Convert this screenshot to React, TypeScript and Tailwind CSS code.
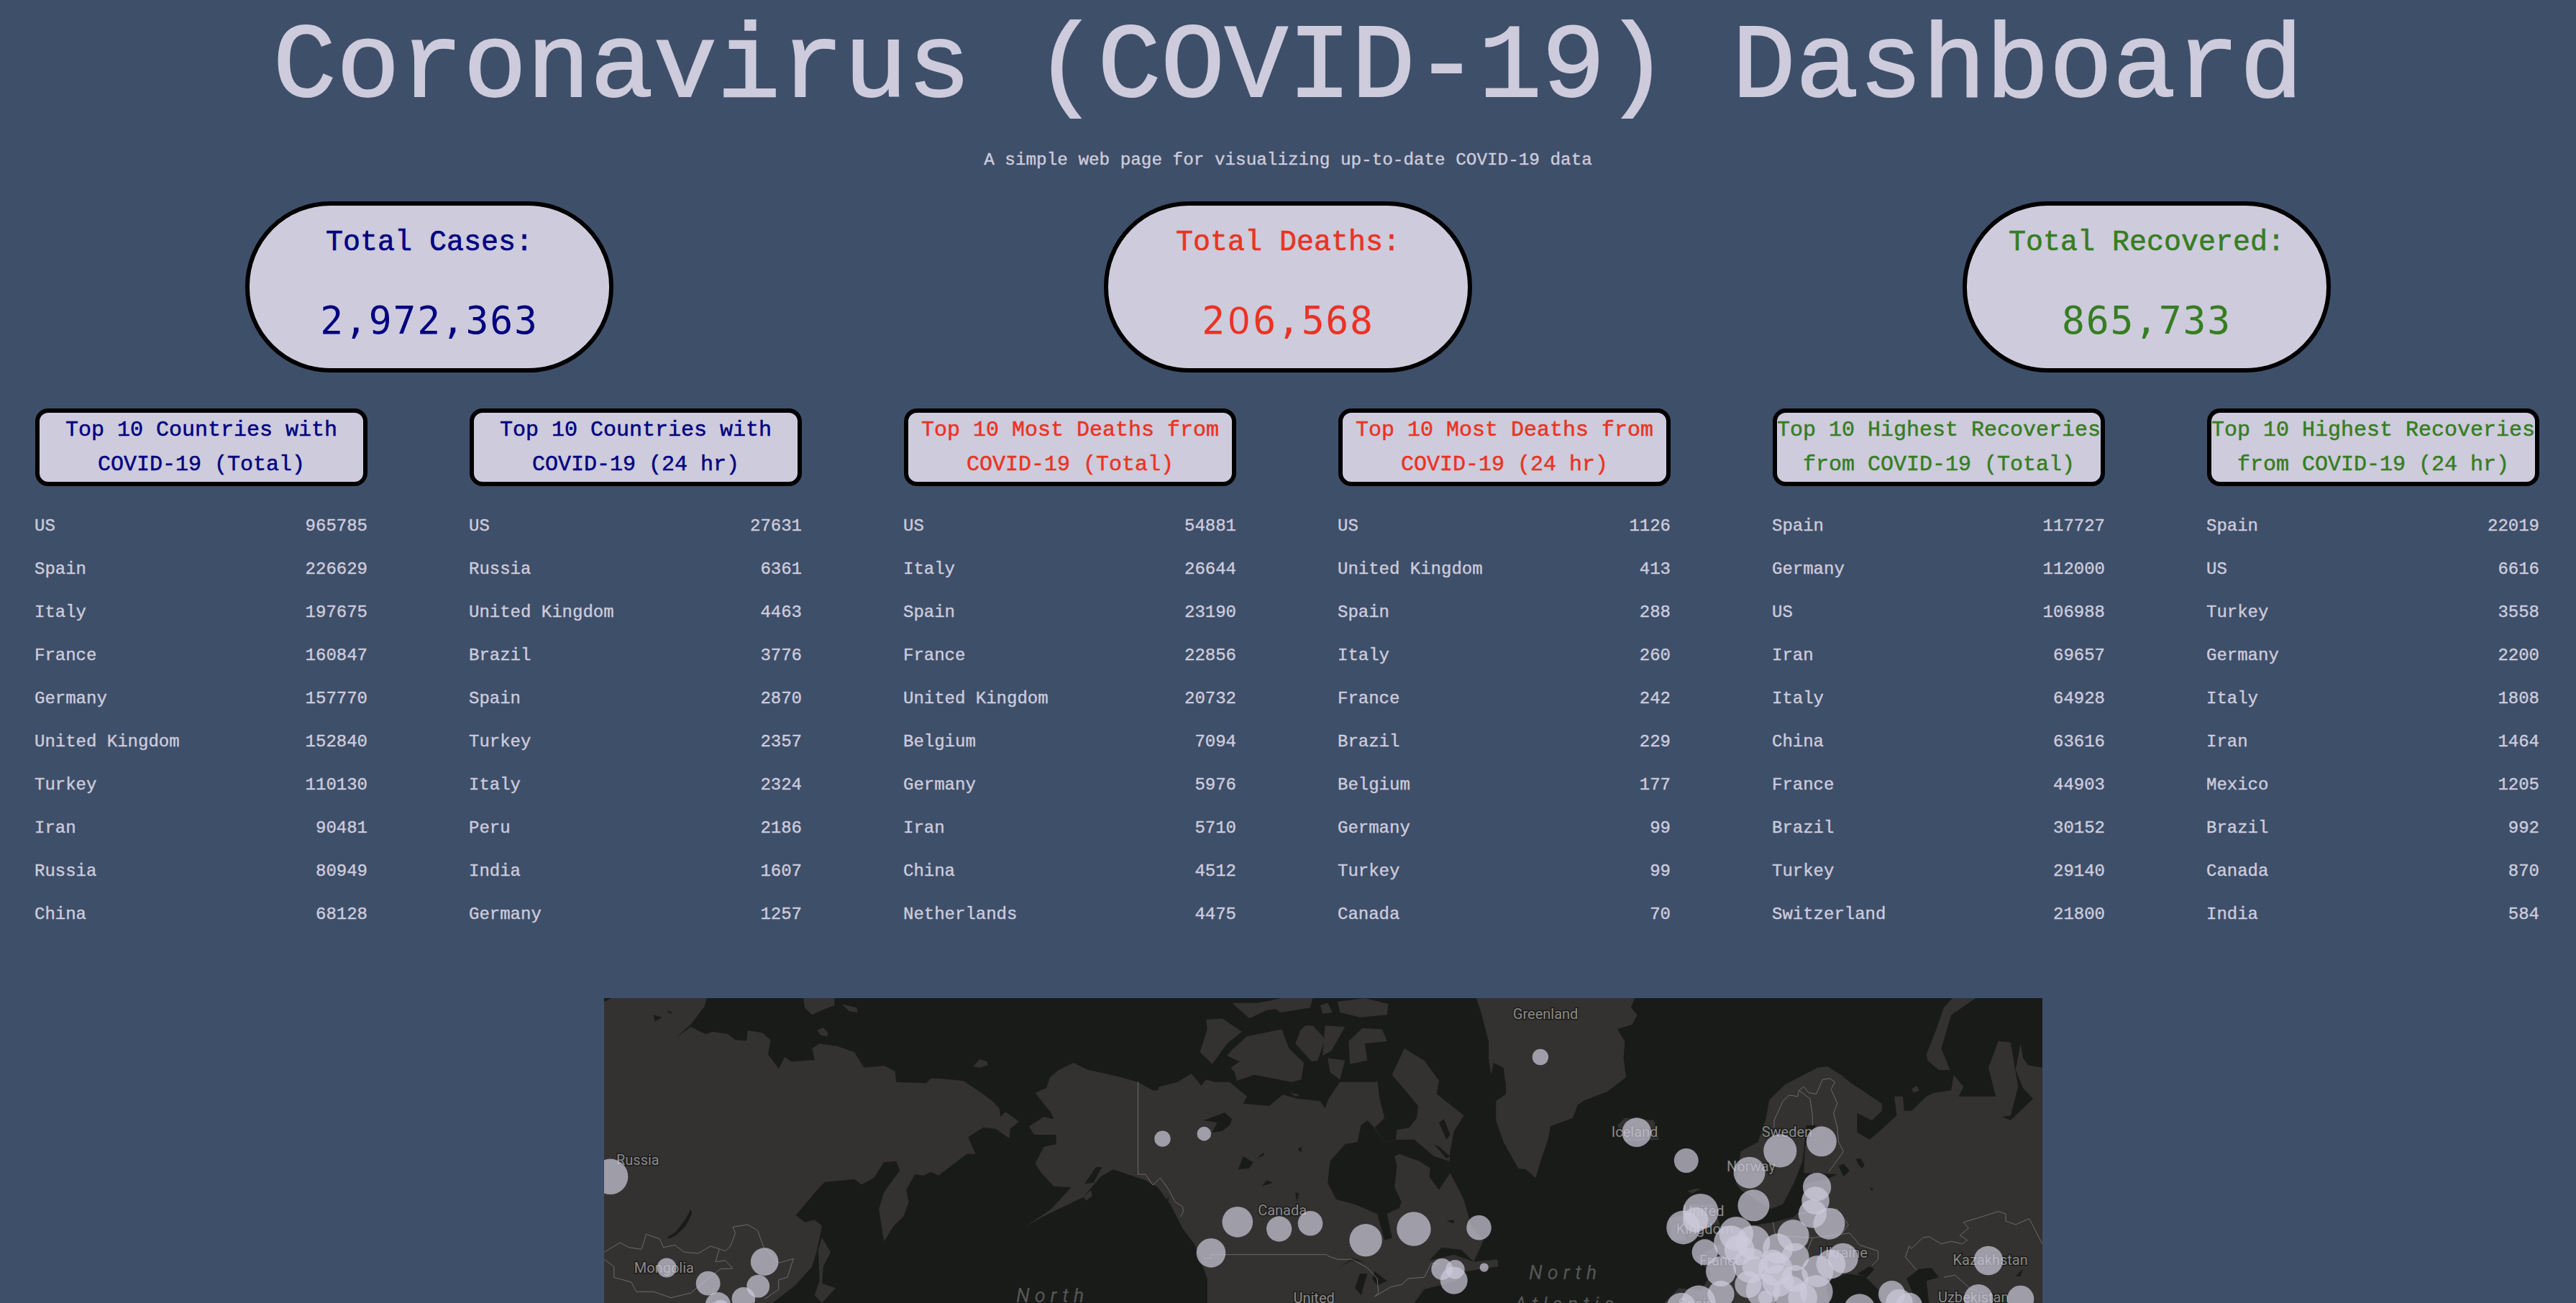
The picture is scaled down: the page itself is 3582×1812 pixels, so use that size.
import React from "react";

type Row = [string, number];
const navy = "text-[#000080]";
const red = "text-[#ea3323]";
const green = "text-[#377d22]";

const tables: { title: [string, string]; color: string; rows: Row[] }[] = [
  { title: ["Top 10 Countries with", "COVID-19 (Total)"], color: navy, rows: [["US", 965785], ["Spain", 226629], ["Italy", 197675], ["France", 160847], ["Germany", 157770], ["United Kingdom", 152840], ["Turkey", 110130], ["Iran", 90481], ["Russia", 80949], ["China", 68128]] },
  { title: ["Top 10 Countries with", "COVID-19 (24 hr)"], color: navy, rows: [["US", 27631], ["Russia", 6361], ["United Kingdom", 4463], ["Brazil", 3776], ["Spain", 2870], ["Turkey", 2357], ["Italy", 2324], ["Peru", 2186], ["India", 1607], ["Germany", 1257]] },
  { title: ["Top 10 Most Deaths from", "COVID-19 (Total)"], color: red, rows: [["US", 54881], ["Italy", 26644], ["Spain", 23190], ["France", 22856], ["United Kingdom", 20732], ["Belgium", 7094], ["Germany", 5976], ["Iran", 5710], ["China", 4512], ["Netherlands", 4475]] },
  { title: ["Top 10 Most Deaths from", "COVID-19 (24 hr)"], color: red, rows: [["US", 1126], ["United Kingdom", 413], ["Spain", 288], ["Italy", 260], ["France", 242], ["Brazil", 229], ["Belgium", 177], ["Germany", 99], ["Turkey", 99], ["Canada", 70]] },
  { title: ["Top 10 Highest Recoveries", "from COVID-19 (Total)"], color: green, rows: [["Spain", 117727], ["Germany", 112000], ["US", 106988], ["Iran", 69657], ["Italy", 64928], ["China", 63616], ["France", 44903], ["Brazil", 30152], ["Turkey", 29140], ["Switzerland", 21800]] },
  { title: ["Top 10 Highest Recoveries", "from COVID-19 (24 hr)"], color: green, rows: [["Spain", 22019], ["US", 6616], ["Turkey", 3558], ["Germany", 2200], ["Italy", 1808], ["Iran", 1464], ["Mexico", 1205], ["Brazil", 992], ["Canada", 870], ["India", 584]] },
];

const totals: { label: string; value: React.ReactNode; color: string }[] = [
  { label: "Total Cases:", value: "2,972,363", color: navy },
  { label: "Total Deaths:", value: <>2<span className="px-[3px] font-['Liberation_Sans',sans-serif]">0</span>6,568</>, color: red },
  { label: "Total Recovered:", value: "865,733", color: green },
];

const OCEAN = "#191b19";
const LAND = "#333230";
const BORDER = "#6c6b69";

// Map outlines are noted in crop coordinates: each region has its own x offset.
const conv = (off: number, pts: number[]) => {
  const out: string[] = [];
  for (let i = 0; i < pts.length; i += 2) out.push(`${(off + pts[i] / 2.904).toFixed(1)},${(pts[i + 1] / 3).toFixed(1)}`);
  return out.join(" ");
};
const A = 0, B = 460, C = 920, D = 1460;
const join = (...parts: string[]) => parts.join(" ");

const land: string[] = [
  // Siberia
  conv(A, [0,15,30,0,415,0,405,35,350,110,290,165,350,120,410,150,440,140,500,150,530,175,575,178,580,135,640,145,672,175,662,235,705,295,730,245,755,265,850,258,840,210,870,190,940,200,1010,225,1050,290,1130,282,1175,305,1180,350,1300,355,1320,335,1355,335,1450,345,1530,400,1568,430,1596,460,1601,495,1621,475,1676,515,1640,545,1636,585,1581,545,1531,540,1521,515,1530,540,1470,580,1500,650,1465,650,1350,740,1320,725,1290,740,1255,735,1220,800,1230,850,1210,910,1170,950,1130,1015,1110,880,1130,810,1240,655,1260,650,1195,720,1180,680,1130,685,1090,750,1040,778,1010,755,890,768,860,800,775,905,810,935,850,925,880,950,870,1000,860,1050,840,1120,770,1200,680,1272,0,1272]),
  conv(A, [880,1000,915,1060,885,1120,880,1190,935,1210,880,1272,850,1240,870,1180,865,1050]),
  conv(A, [805,0,930,0,930,30,880,50,840,70,810,40]),
  conv(A, [960,25,1020,40,1025,60,990,55]),
  conv(A, [860,135,885,122,905,145,900,160,875,155]),
  conv(B, [155,285,180,255,210,265,215,280,180,290]),
  // Alaska + Canada + USA mainland
  join(
    conv(B, [405,395,450,375,465,330,500,300,560,270,620,300,690,315,750,330,820,350,880,385,900,385,905,370,980,350,1035,315,1060,345,1075,365,1095,340,1130,350,1190,350,1260,410,1245,440,1350,450,1420,390,1568,430]),
    conv(C, [240,440,300,350,440,350,510,320,560,210,640,260,700,345,690,400,800,490,760,555,745,640,740,720,800,840,830,950,880,1010,840,1100,935,1090,940,1120,810,1140,770,1180,640,1215,600,1272,0,1272]),
    conv(B, [1100,1272,1100,1170,1050,1030,1000,960,950,860,900,790,850,760,720,715,670,745,640,780,600,830,500,880,430,915,365,955,470,880,550,790,480,785,430,730,405,690,440,620,490,610,490,570,400,570,380,535,440,495,480,505,470,480])
  ),
  conv(B, [600,830,630,800,635,825,610,845]),
  // Arctic archipelago
  conv(B, [1095,90,1160,85,1240,140,1180,190,1120,275,1070,225,1100,130]),
  conv(B, [1200,215,1260,160,1400,130,1430,210,1490,270,1480,340,1440,350,1290,320,1220,345,1210,310,1195,290,1230,265,1180,240]),
  conv(B, [1200,20,1300,20,1420,0,1440,40,1340,50,1270,85]),
  conv(C, [0,15,60,0,190,0,180,40,60,60]),
  conv(C, [220,30,250,20,270,60,230,65]),
  conv(C, [290,15,400,0,495,25,490,70,380,80,300,60]),
  conv(C, [140,135,160,115,190,115,240,170,210,260,185,265,120,190]),
  conv(C, [240,115,320,120,265,220,230,240]),
  conv(C, [335,180,390,125,470,130,490,180,400,190,410,260,340,275]),
  conv(C, [20,140,70,135,70,220,30,240]),
  conv(C, [250,250,320,260,300,340,260,310]),
  // Greenland
  conv(C, [850,0,1490,0,1475,40,1500,70,1480,110,1420,130,1450,180,1445,250,1455,330,1380,390,1290,425,1260,445,1240,500,1150,535,1140,590,1110,680,1090,750,1050,715,1020,710,960,600,930,510,930,430,970,400,970,350,910,320,900,250,900,180,870,60]),
  // Iceland, UK
  conv(C, [1420,530,1450,500,1568,510,1590,590,1450,600]),
  conv(D, [170,795,190,795,150,815,135,805]),
  conv(D, [150,860,240,860,270,960,140,1000]),
  conv(D, [60,920,130,900,130,1010,70,1010]),
  // Europe + western Russia
  conv(D, [465,425,530,360,660,290,700,285,755,320,790,350,920,440,920,470,880,510,820,480,820,560,870,590,905,560,980,490,970,410,1005,410,1010,470,1040,470,1100,410,1130,395,1200,385,1210,320,1250,370,1230,410,1380,410,1350,290,1390,180,1440,185,1470,370,1440,490,1405,495,1440,510,1530,420,1490,375,1460,300,1480,190,1490,250,1510,280,1568,290,1568,1272,40,1272,100,1210,190,1220,230,1150,170,1080,260,1030,330,960,480,935,470,880,350,800,330,770,350,640,420,600,450,510]),
  // Novaya Zemlya, Kolguev
  conv(D, [1205,0,1300,0,1200,70,1160,210,1195,300,1150,300,1105,260,1100,235,1140,130,1170,40]),
  conv(D, [1040,380,1060,365,1072,385,1050,395]),
];

const water: string[] = [
  conv(A, [350,880,355,900,330,950,290,990,260,1005,258,995,290,975,330,920]),
  conv(A, [200,70,235,80,205,98]),
  conv(A, [255,50,275,60,265,65]),
  conv(B, [605,775,650,705,675,705,640,770]),
  conv(B, [1085,510,1170,478,1200,505,1190,530,1160,555,1120,560,1140,520]),
  conv(B, [1245,660,1285,685,1270,710,1225,715]),
  conv(B, [1300,670,1325,645,1330,655]),
  conv(B, [1320,785,1340,760,1365,770]),
  conv(B, [1465,630,1480,620,1480,645]),
  conv(B, [925,860,945,825,940,860]),
  // Hudson Bay, Foxe Basin
  conv(C, [320,610,370,600,385,530,410,510,430,530,480,600,530,590,600,590,680,660,740,680,745,730,700,800,660,745,665,710,620,680,540,650,520,660,530,700,520,790,548,850,540,875,490,900,510,1000,480,1010,450,900,360,860,285,840,250,770,260,680]),
  conv(C, [450,340,510,320,560,380,615,450,610,500,580,540,530,550,525,590,480,600,440,540,480,500,460,420]),
  conv(C, [700,520,720,505,745,570,730,590]),
  conv(C, [680,610,700,620,745,660,730,670]),
  conv(C, [0,400,60,365,120,410,200,385,260,400,240,460,220,430,130,420,60,400,0,445]),
  conv(C, [295,1125,350,1085,400,1100,345,1095]),
  conv(C, [360,1210,380,1150,410,1150,385,1240]),
  conv(C, [430,1170,440,1140,490,1180,450,1200]),
  conv(C, [660,1095,710,1040,790,1050,840,1100,760,1070]),
  conv(C, [730,930,760,925,760,940]),
  conv(C, [120,810,135,815,125,850]),
  conv(C, [920,270,960,290,970,370,925,370,910,320]),
  // Baltic and European seas
  conv(D, [615,530,655,530,610,620,605,730,740,735,700,755,610,775,590,890,560,915,480,935,470,880,520,860,565,770,600,680]),
  conv(D, [745,700,765,690,790,720,765,745]),
  conv(D, [815,670,835,670,850,695,840,710,825,695]),
  conv(D, [870,790,885,795,880,805]),
  conv(D, [690,1180,780,1150,850,1160,910,1220,920,1272,710,1272]),
  conv(D, [820,1150,870,1120,890,1130,860,1165]),
  conv(D, [1020,1170,1070,1130,1120,1125,1150,1165,1100,1180,1110,1272,1060,1272,1040,1220]),
  conv(D, [1460,1160,1490,1130,1480,1160]),
];

const borders: string[] = [
  conv(A, [0,1060,65,1020,100,1040,150,1048,160,1020,170,985,225,1005,240,1040,285,1030,325,1060,380,1065,430,1035,470,1048,490,1055,510,1035,530,980,520,955,580,945,620,970,645,1040,705,1105,765,1087,740,1165,705,1175,705,1215,650,1255]),
  conv(A, [0,1090,40,1120,40,1165,110,1185,130,1225,200,1225,270,1250,350,1230,420,1170,470,1130,520,1128,490,1095,450,1100,465,1048]),
  conv(B, [820,350,820,735,850,735,880,780,910,750,945,800,970,850,1000,870,1003,890,992,912]),
  join(conv(B, [1085,1085,1115,1085,1115,1070,1568,1070]), conv(C, [245,1070,250,1075,290,1090,350,1090,410,1125,450,1170,455,1230,440,1245,505,1205,550,1195,575,1170,640,1165,670,1105,700,1110])),
  conv(D, [485,540,485,510,520,430,545,405,580,410,585,385,605,370,625,395,655,400,680,340,710,335,730,350,715,380,740,440,725,480,740,540,745,600,765,640,705,725]),
  conv(D, [585,385,630,420,640,490,640,530]),
  conv(D, [1060,1135,1015,1080,1030,1035,1040,1045,1085,1000,1110,995,1160,1025,1200,1015,1245,1025,1265,1010,1235,990,1270,960,1250,935,1330,910,1390,890,1420,900,1420,930,1460,945,1515,920,1568,1025]),
  conv(D, [640,1000,720,990,790,980,830,1030,905,1055,905,1090,880,1115]),
  conv(D, [1170,1165,1215,1155,1280,1215,1330,1230]),
  conv(D, [580,900,740,880,785,945,760,980]),
  conv(D, [480,935,490,990,640,1000,620,1050]),
];

const c = (off: number, list: number[][]) => list.map(([x, y, r]) => [off + x / 2.904, y / 3, r / 2.95]);
const circles = [
  ...c(A, [[25,745,73],[253,1125,40],[420,1190,50],[648,1100,57],[622,1202,47],[563,1255,48],[460,1280,52],[470,1300,40]]),
  ...c(B, [[919,587,33],[1087,566,29],[1222,934,63],[1390,963,52],[1516,940,51],[1115,1063,60]]),
  ...c(C, [[404,1010,67],[598,963,70],[861,958,51],[712,1131,44],[765,1132,39],[760,1178,56],[882,1124,18],[1109,246,33],[1498,560,60]]),
  ...c(D, [[130,678,50],[509,637,68],[676,598,62],[385,728,65],[402,865,65],[658,788,58],[652,845,57],[640,900,58],[707,941,65],[188,890,73],[118,957,69],[168,925,52],[562,990,65],[205,1060,53],[332,983,70],[310,1020,70],[400,1020,70],[345,1050,62],[500,1045,62],[763,1085,62],[714,1110,60],[270,1140,62],[390,1115,72],[570,1080,57],[480,1100,50],[490,1130,70],[400,1120,45],[660,1140,65],[270,1235,55],[380,1195,55],[500,1180,65],[570,1170,55],[440,1220,70],[550,1230,70],[655,1225,68],[600,1250,60],[180,1270,70],[110,1290,60],[450,1250,30],[960,1235,55],[830,1300,65],[990,1270,55],[1030,1285,55],[1350,1095,60],[1310,1255,60],[1480,1255,55]]),
];

const L = (off: number, x: number, y: number) => ({ x: off + x / 2.904, y: y / 3 });
const labels: { t: string; x: number; y: number }[] = [
  { t: "Russia", ...L(A, 136, 695) },
  { t: "Mongolia", ...L(A, 242, 1145) },
  { t: "Canada", ...L(B, 1403, 905) },
  { t: "United", ...L(C, 195, 1272) },
  { t: "Greenland", ...L(C, 1130, 88) },
  { t: "Iceland", ...L(C, 1490, 580) },
  { t: "Sweden", ...L(D, 537, 580) },
  { t: "Norway", ...L(D, 392, 722) },
  { t: "United", ...L(D, 200, 908) },
  { t: "Kingdom", ...L(D, 205, 983) },
  { t: "France", ...L(D, 270, 1115) },
  { t: "Ukraine", ...L(D, 765, 1082) },
  { t: "Kazakhstan", ...L(D, 1358, 1112) },
  { t: "Uzbekistan", ...L(D, 1290, 1268) },
  { t: "Spain", ...L(D, 170, 1295) },
];
const seas = [
  { t: "North", ...L(B, 475, 1270) },
  { t: "North", ...L(C, 1210, 1172) },
  { t: "Atlantic", ...L(C, 1215, 1305) },
];

function WorldMap() {
  return (
    <svg viewBox="0 0 2000 424" className="block w-full h-full">
      <rect width="2000" height="424" fill={OCEAN} />
      {land.map((p, i) => <polygon key={i} points={p} fill={LAND} />)}
      {water.map((p, i) => <polygon key={i} points={p} fill={OCEAN} />)}
      {borders.map((p, i) => <polyline key={i} points={p} fill="none" stroke={BORDER} strokeWidth="1" />)}
      {seas.map((s, i) => (
        <text key={i} x={s.x} y={s.y} textAnchor="middle" fontFamily="Roboto, sans-serif" fontStyle="italic" fontSize="27" letterSpacing="7" fill="#565655">{s.t}</text>
      ))}
      {labels.map((l, i) => (
        <text key={i} x={l.x} y={l.y} textAnchor="middle" fontFamily="Roboto, sans-serif" fontSize="20" fill="#8a8988" stroke="#1c1c1b" strokeWidth="3" paintOrder="stroke">{l.t}</text>
      ))}
      {circles.map(([x, y, r], i) => <circle key={i} cx={x} cy={y} r={r} fill="#cdcbdc" fillOpacity="0.7" />)}
    </svg>
  );
}

export default function App() {
  return (
    <div className="h-[1812px] overflow-hidden bg-[#3e4f69] font-['Liberation_Mono',monospace] text-[#cdcbdc]">
      <h1 className="text-center text-[147px] leading-[190px] [-webkit-text-stroke:2px]">Coronavirus (COVID-19) Dashboard</h1>
      <p className="mt-[17px] text-center text-[24.3px] leading-8 [-webkit-text-stroke:0.4px]">A simple web page for visualizing up-to-date COVID-19 data</p>

      <section className="mt-[41px] grid grid-cols-3">
        {totals.map((t) => (
          <div key={t.label} className={`mx-auto flex h-[238px] w-[512px] flex-col items-center rounded-[118px] border-[6px] border-black bg-[#cdcbdc] pt-[22px] ${t.color}`}>
            <h2 className="text-[40px] leading-[60px] [-webkit-text-stroke:0.6px]">{t.label}</h2>
            <div className="mt-[46px] font-['DejaVu_Sans_Mono',monospace] text-[53px] leading-[64px] tracking-[1.8px]">{t.value}</div>
          </div>
        ))}
      </section>

      <section className="mt-[50px] flex justify-between pl-[49px] pr-[51px]">
        {tables.map((t, i) => (
          <div key={i} className="w-[462px]">
            <h3 className={`h-[108px] rounded-[18px] border-[6px] border-black bg-[#cdcbdc] text-center text-[30px] leading-[48px] whitespace-nowrap [-webkit-text-stroke:0.5px] ${t.color}`}>
              {t.title[0]}
              <br />
              {t.title[1]}
            </h3>
            <div className="-ml-px mt-[26px] text-2xl [-webkit-text-stroke:0.4px]">
              {t.rows.map(([name, n]) => (
                <div key={name} className="flex h-[60px] items-center justify-between">
                  <span>{name}</span>
                  <span>{n}</span>
                </div>
              ))}
            </div>
          </div>
        ))}
      </section>

      <section className="ml-[840px] mt-[86px] h-[424px] w-[2000px]">
        <WorldMap />
      </section>
    </div>
  );
}
